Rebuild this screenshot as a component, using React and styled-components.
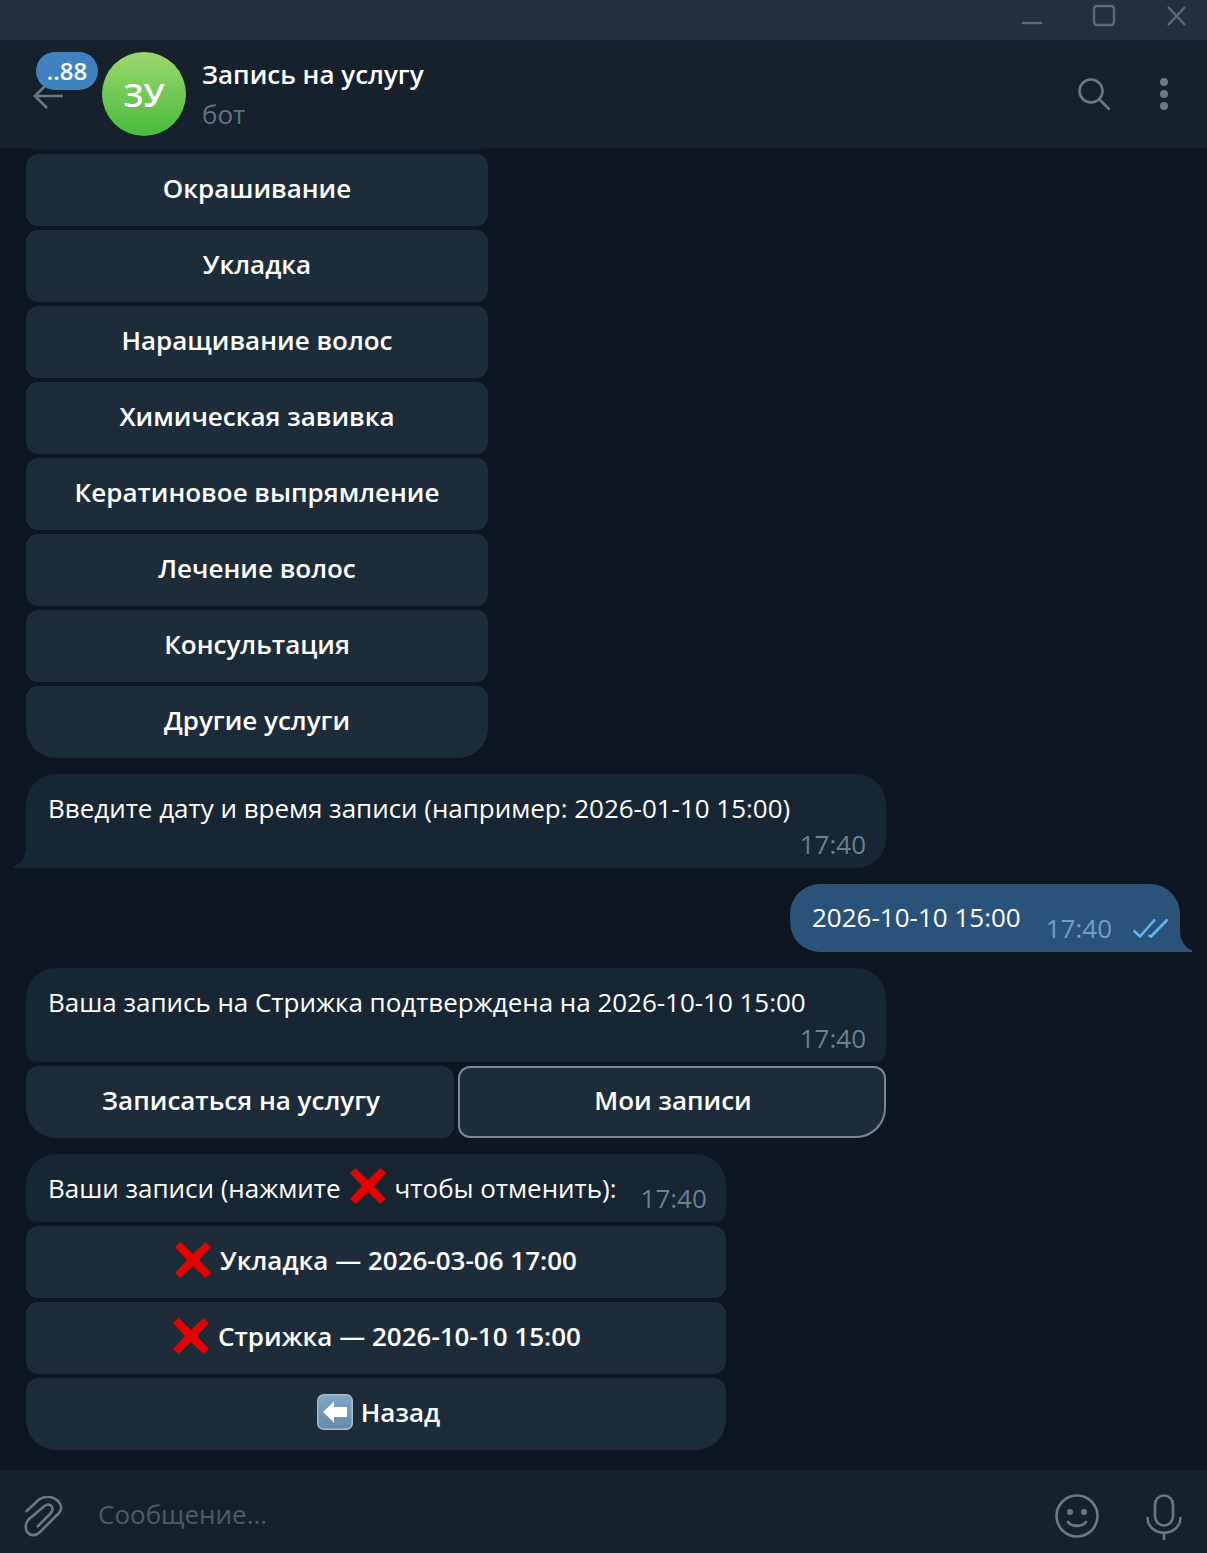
import React from 'react';
import styled, { createGlobalStyle } from 'styled-components';

const GlobalStyle = createGlobalStyle`
  html, body {
    margin: 0;
    padding: 0;
    background: #0e1621;
  }
  * {
    box-sizing: border-box;
  }
`;

const Page = styled.div`
  width: 1207px;
  height: 1553px;
  display: flex;
  flex-direction: column;
  overflow: hidden;
  background: #0e1621;
  color: #ffffff;
  font-family: "Open Sans", "Noto Sans", sans-serif;
  font-size: 26px;
  line-height: 36px;
`;

const TitleBar = styled.div`
  height: 40px;
  flex: none;
  background: #242f3d;
  display: flex;
  justify-content: flex-end;
  align-items: flex-start;
  padding: 4px 21px 0 0;
  gap: 50px;
  color: #5d6a78;
`;

const Header = styled.header`
  height: 108px;
  flex: none;
  background: #17212b;
  display: flex;
  align-items: center;
  padding: 0 39px 0 33px;
`;

const BackButton = styled.div`
  position: relative;
  width: 69px;
  height: 84px;
  flex: none;
  display: flex;
  align-items: flex-end;
  padding-bottom: 27px;
  color: #6c7883;
`;

const Badge = styled.span`
  position: absolute;
  left: 3px;
  top: 0;
  width: 62px;
  height: 38px;
  border-radius: 19px;
  background: #3f82bf;
  color: #ffffff;
  font-size: 24px;
  font-weight: 600;
  line-height: 37px;
  text-align: center;
`;

const Avatar = styled.div`
  width: 84px;
  height: 84px;
  flex: none;
  border-radius: 50%;
  background: linear-gradient(#9ed76e, #47bb3c);
  font-size: 33px;
  font-weight: 600;
  line-height: 86px;
  text-align: center;
`;

const ChatInfo = styled.div`
  flex: 1;
  margin-left: 16px;
  display: flex;
  flex-direction: column;
  gap: 4px;
`;

const ChatTitle = styled.div`
  font-weight: 600;
`;

const ChatStatus = styled.div`
  color: #5f7288;
`;

const HeaderActions = styled.div`
  display: flex;
  align-items: center;
  gap: 50px;
  color: #6c7883;
`;

const Chat = styled.main`
  flex: 1;
  display: flex;
  flex-direction: column;
  align-items: flex-start;
  gap: 16px;
  padding: 0 27px 0 26px;
`;

const Group = styled.div`
  display: flex;
  flex-direction: column;
  gap: 4px;
  width: ${(p) => p.$width}px;
`;

const CutOffEdge = styled.div`
  height: 2px;
  margin: 0 4px;
  background: #121d29;
`;

const KeyButton = styled.div`
  flex: 1 0 72px;
  height: 72px;
  display: flex;
  align-items: center;
  justify-content: center;
  padding-bottom: 4px;
  background: #1e2c3a;
  border: ${(p) => (p.$focused ? '2px solid #7d8891' : 'none')};
  border-radius: ${(p) => p.$radius || '12px'};
  font-weight: 600;
  white-space: pre;
`;

const Row = styled.div`
  display: flex;
  gap: 4px;

  ${KeyButton} {
    padding-left: 2px;
  }
`;

const Bubble = styled.div`
  position: relative;
  background: #182533;
  border-radius: ${(p) => p.$radius || '30px'};
  padding: ${(p) => p.$padding || '16px 20px 6px 22px'};
  letter-spacing: -0.03px;
  white-space: pre;
`;

const BubbleTail = styled.svg`
  position: absolute;
  bottom: 0;
  left: -12px;
  width: 12px;
  height: 20px;
  color: #182533;
`;

const TimeBelow = styled.div`
  text-align: right;
  color: #6d7f8f;
  letter-spacing: 0;
`;

const InlineMessage = styled.div`
  display: flex;
  align-items: flex-start;
`;

const InlineTime = styled.span`
  margin: 10px 0 0 24px;
  color: #6d7f8f;
  letter-spacing: 0;
`;

const SentBubble = styled.div`
  position: relative;
  align-self: flex-end;
  width: 390px;
  height: 68px;
  background: #2b5278;
  border-radius: 30px 30px 0 30px;
  padding: 15px 0 0 22px;
  display: flex;
  align-items: flex-start;
`;

const SentTime = styled.span`
  margin: 11px 0 0 25px;
  color: #6d9fcf;
`;

const Checks = styled.svg`
  width: 36px;
  height: 22px;
  margin: 19px 0 0 21px;
  color: #5fb8f2;
`;

const SentTail = styled.svg`
  position: absolute;
  bottom: 0;
  right: -12px;
  width: 12px;
  height: 20px;
  color: #2b5278;
`;

const EmojiIcon = styled.svg`
  width: 36px;
  height: 36px;
  flex: none;
  margin: ${(p) => p.$margin || '0 9px 0 2px'};
`;

const Composer = styled.footer`
  height: 83px;
  flex: none;
  background: #17212b;
  display: flex;
  align-items: center;
  padding: 11px 24px 0;
  color: #6c7883;
`;

const Placeholder = styled.div`
  flex: 1;
  margin: 0 0 6px 35px;
  color: #4d5a67;
`;

const ComposerActions = styled.div`
  display: flex;
  align-items: flex-start;
  gap: 47px;
  margin-right: 1px;
`;

const IconSvg = styled.svg`
  display: block;
  flex: none;
`;

const Cross = ({ margin }) => (
  <EmojiIcon viewBox="0 0 36 36" $margin={margin}>
    <path d="M5.5 0 L18 12 L30.5 0 L36 5 L24 18 L36 31 L30.5 36 L18 24 L5.5 36 L0 31 L12 18 L0 5 Z" fill="#e60000" />
  </EmojiIcon>
);

const BackEmoji = () => (
  <EmojiIcon viewBox="0 0 36 36" $margin="0 8px 0 5px">
    <defs>
      <linearGradient id="backGrad" x1="0" y1="0" x2="0" y2="1">
        <stop offset="0" stopColor="#7fa5c8" />
        <stop offset="1" stopColor="#6a8ba8" />
      </linearGradient>
    </defs>
    <rect x="0.75" y="0.75" width="34.5" height="34.5" rx="6" fill="url(#backGrad)" stroke="#a9bccd" strokeWidth="1.5" />
    <path d="M6 18 L17 7.5 L17 13 L30 13 L30 23 L17 23 L17 28.5 Z" fill="#ffffff" />
  </EmojiIcon>
);

const services = [
  'Окрашивание',
  'Укладка',
  'Наращивание волос',
  'Химическая завивка',
  'Кератиновое выпрямление',
  'Лечение волос',
  'Консультация',
  'Другие услуги',
];

const App = () => (
  <Page>
    <GlobalStyle />
    <TitleBar>
      <IconSvg width="22" height="24" viewBox="0 0 22 24">
        <path d="M2 19 H22" stroke="currentColor" strokeWidth="2.4" />
      </IconSvg>
      <IconSvg width="24" height="24" viewBox="0 0 24 24">
        <rect x="2" y="2" width="20" height="19" rx="3" fill="none" stroke="currentColor" strokeWidth="2.4" />
      </IconSvg>
      <IconSvg width="20" height="24" viewBox="0 0 20 24">
        <path d="M2 3 L19 21 M19 3 L2 21" stroke="currentColor" strokeWidth="2.4" />
      </IconSvg>
    </TitleBar>

    <Header>
      <BackButton>
        <IconSvg width="31" height="26" viewBox="0 0 31 26">
          <path d="M30 13 H2 M14 1 L2 13 L14 25" fill="none" stroke="currentColor" strokeWidth="2.6" />
        </IconSvg>
        <Badge>..88</Badge>
      </BackButton>
      <Avatar>ЗУ</Avatar>
      <ChatInfo>
        <ChatTitle>Запись на услугу</ChatTitle>
        <ChatStatus>бот</ChatStatus>
      </ChatInfo>
      <HeaderActions>
        <IconSvg width="32" height="32" viewBox="0 0 32 32">
          <circle cx="13" cy="13" r="11.5" fill="none" stroke="currentColor" strokeWidth="2.6" />
          <path d="M21 21 L31 31" stroke="currentColor" strokeWidth="2.6" strokeLinecap="round" />
        </IconSvg>
        <IconSvg width="8" height="32" viewBox="0 0 8 32">
          <circle cx="4" cy="4" r="4" fill="currentColor" />
          <circle cx="4" cy="16" r="4" fill="currentColor" />
          <circle cx="4" cy="28" r="4" fill="currentColor" />
        </IconSvg>
      </HeaderActions>
    </Header>

    <Chat>
      <Group $width={462}>
        <CutOffEdge />
        {services.map((name, i) => (
          <KeyButton key={name} $radius={i === services.length - 1 ? '12px 12px 30px 30px' : undefined}>
            {name}
          </KeyButton>
        ))}
      </Group>

      <Group $width={860}>
        <Bubble $radius="30px 30px 30px 0">
          <BubbleTail viewBox="0 0 12 20">
            <path d="M12 0 C12 8 6 17 0 18 V20 H12 Z" fill="currentColor" />
          </BubbleTail>
          Введите дату и время записи (например: 2026-01-10 15:00)
          <TimeBelow>17:40</TimeBelow>
        </Bubble>
      </Group>

      <SentBubble>
        2026-10-10 15:00
        <SentTime>17:40</SentTime>
        <Checks viewBox="0 0 36 22">
          <path d="M0.5 12.5 L7 18.5 L22 1.5 M15.5 17 L18 18.5 L34.5 1.5" fill="none" stroke="currentColor" strokeWidth="2.6" />
        </Checks>
        <SentTail viewBox="0 0 12 20">
          <path d="M0 0 C0 8 6 17 12 18 V20 H0 Z" fill="currentColor" />
        </SentTail>
      </SentBubble>

      <Group $width={860}>
        <Bubble $radius="30px 30px 12px 12px">
          Ваша запись на Стрижка подтверждена на 2026-10-10 15:00
          <TimeBelow>17:40</TimeBelow>
        </Bubble>
        <Row>
          <KeyButton $radius="12px 12px 12px 30px">Записаться на услугу</KeyButton>
          <KeyButton $focused $radius="12px 12px 30px 12px">Мои записи</KeyButton>
        </Row>
      </Group>

      <Group $width={700}>
        <Bubble $radius="30px 30px 12px 12px" $padding="16px 20px 6px 22px">
          <InlineMessage>
            Ваши записи (нажмите
            <Cross margin="-2px 9px 0 9px" />
            чтобы отменить):
            <InlineTime>17:40</InlineTime>
          </InlineMessage>
        </Bubble>
        <KeyButton>
          <Cross margin="0 9px 0 0" />
          Укладка — 2026-03-06 17:00
        </KeyButton>
        <KeyButton>
          <Cross />
          Стрижка — 2026-10-10 15:00
        </KeyButton>
        <KeyButton $radius="12px 12px 30px 30px">
          <BackEmoji />
          Назад
        </KeyButton>
      </Group>
    </Chat>

    <Composer>
      <IconSvg width="39" height="42" viewBox="0 0 39 42">
        <path
          d="M2.7 15 L15 3.5 C22 -1 30 1 34 5 C38 9 38 14 35 17 L16 36 C12 40 7 40 4 37 C1 34 1 28 4 24 L21 9.5 C24 7.5 27 9 28 11 C29 13 28 16 26 18 L13.7 30.3"
          fill="none"
          stroke="currentColor"
          strokeWidth="2.6"
          strokeLinecap="round"
        />
      </IconSvg>
      <Placeholder>Сообщение...</Placeholder>
      <ComposerActions>
        <IconSvg width="44" height="44" viewBox="0 0 44 44">
          <circle cx="22" cy="22" r="20.5" fill="none" stroke="currentColor" strokeWidth="2.6" />
          <circle cx="15" cy="18" r="3" fill="currentColor" />
          <circle cx="29" cy="18" r="3" fill="currentColor" />
          <path d="M13 28 C17 33 27 33 31 28" fill="none" stroke="currentColor" strokeWidth="2.8" strokeLinecap="round" />
        </IconSvg>
        <IconSvg width="36" height="46" viewBox="0 0 36 46">
          <rect x="9" y="1.5" width="18" height="30" rx="9" fill="none" stroke="currentColor" strokeWidth="2.6" />
          <path d="M1.5 23 C1.5 44 34.5 44 34.5 23 M18 38 V46" fill="none" stroke="currentColor" strokeWidth="2.6" />
        </IconSvg>
      </ComposerActions>
    </Composer>
  </Page>
);

export default App;
